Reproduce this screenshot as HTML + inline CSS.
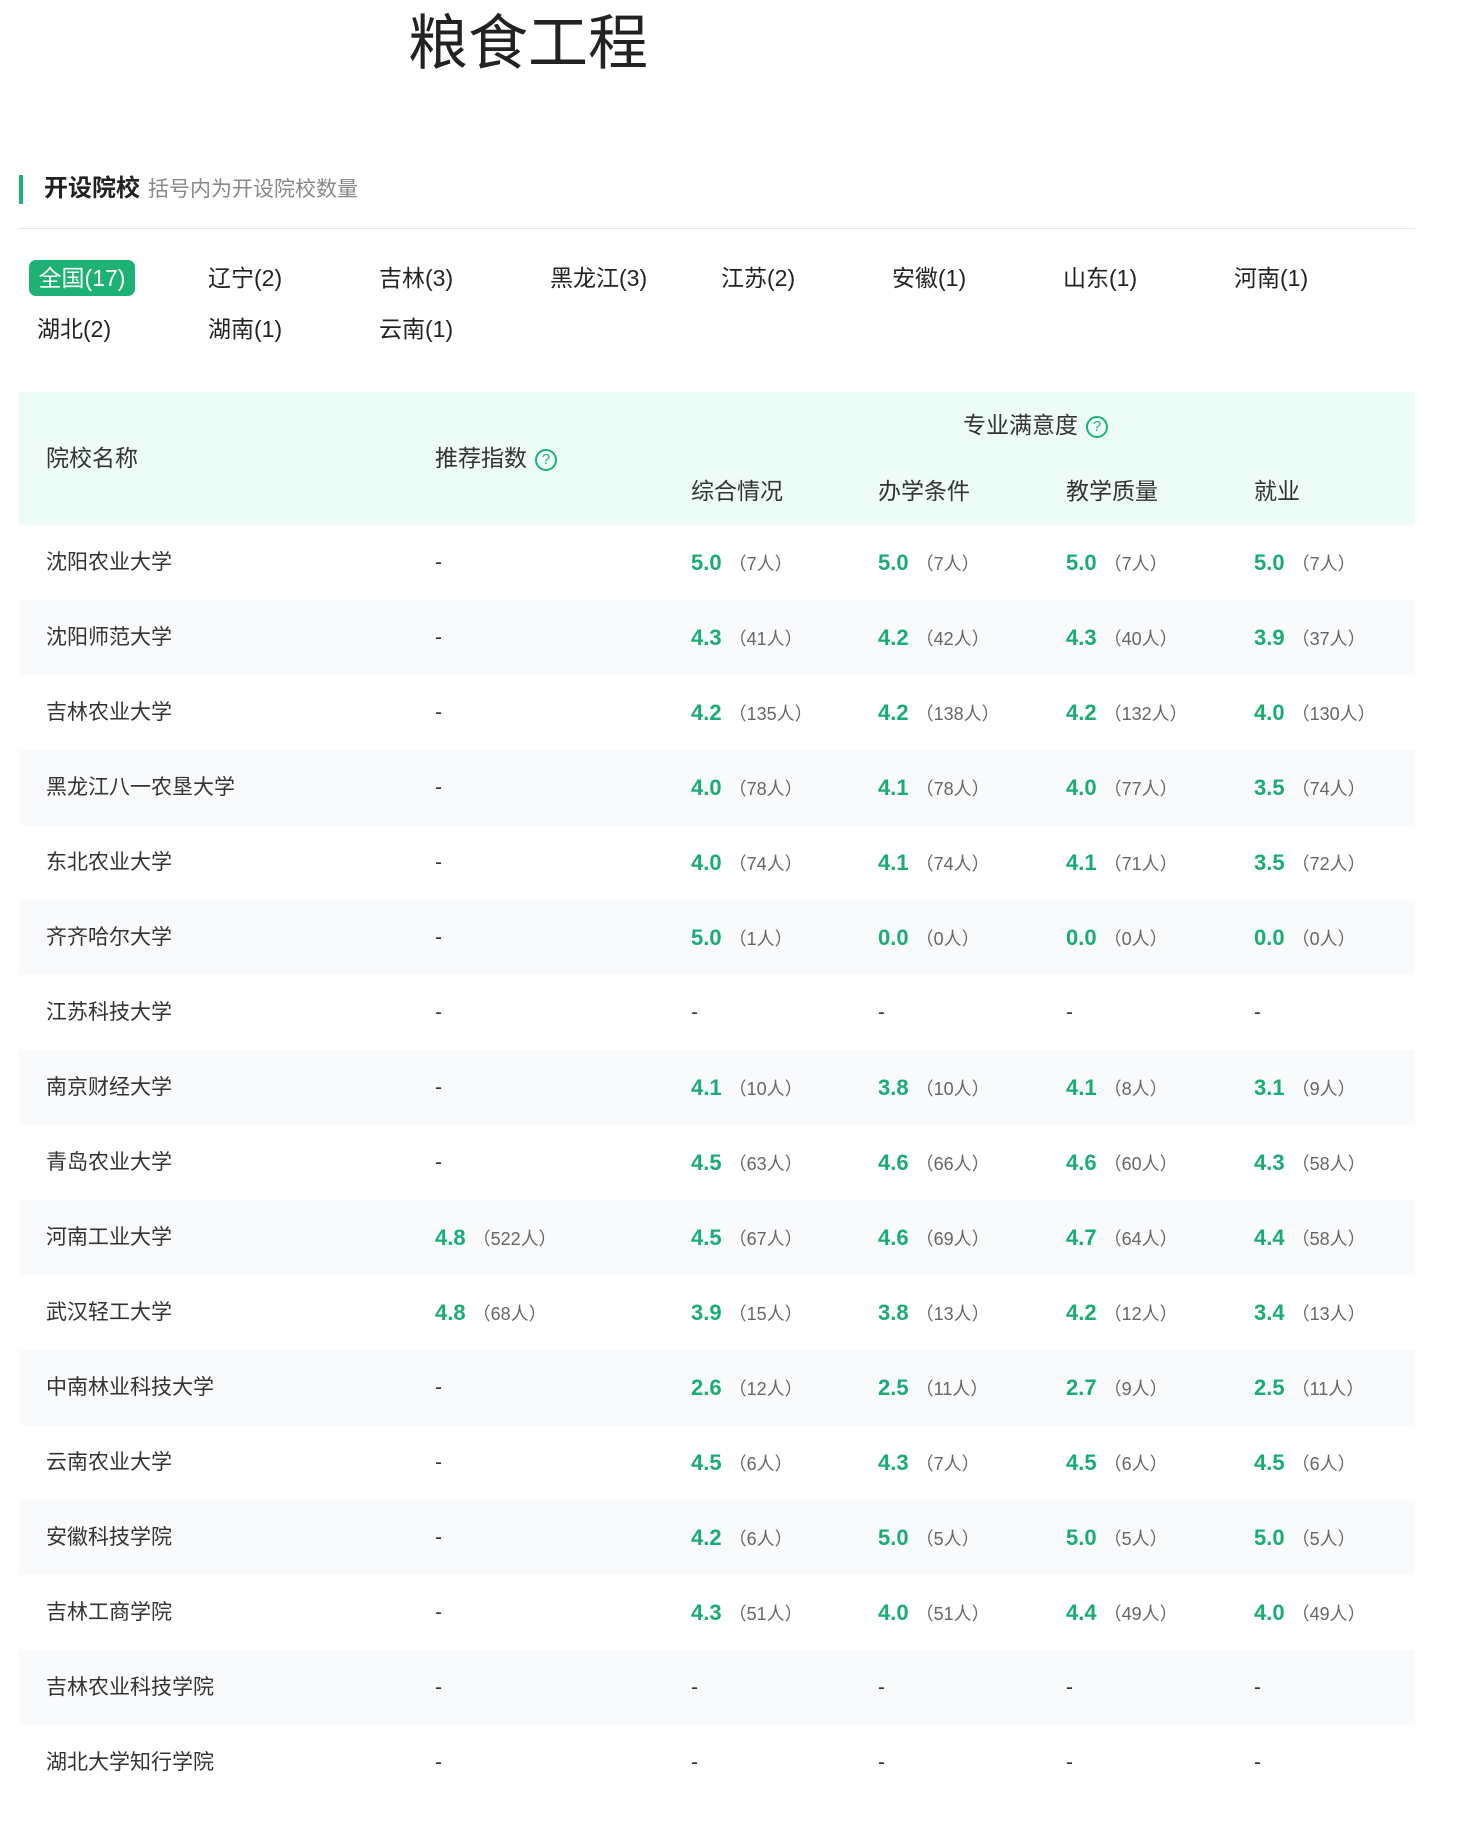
<!DOCTYPE html>
<html><head><meta charset="utf-8"><style>
*{margin:0;padding:0;box-sizing:border-box}
body{width:1459px;height:1843px;background:#fff;font-family:"Liberation Sans","Noto Sans CJK SC",sans-serif;color:#333;position:relative;overflow:hidden}
.abs{position:absolute;white-space:nowrap}
.title{left:408px;top:4px;font-size:60px;line-height:80px;color:#222}
.bar{left:19px;top:175px;width:4px;height:29px;background:#1db273}
.h2{left:44px;top:174px;font-size:24px;font-weight:bold;line-height:30px;color:#222}
.sub{left:148px;top:176px;font-size:21px;line-height:28px;color:#888}
.div{left:19px;top:228px;width:1396px;height:1px;background:#e3e7ee}
.tab{font-size:23px;line-height:36px;color:#222}
.pill{left:29px;top:260px;width:106px;height:36px;border-radius:7px;background:#1db273;color:#fff;text-align:center}
.thead{left:19px;top:392px;width:1396px;height:133px;background:#edfcf6}
.th{font-size:23px;line-height:30px;color:#333}
.q{display:inline-block;width:22px;height:22px;border:2px solid #1db273;border-radius:50%;color:#1db273;font-size:15px;line-height:18px;text-align:center;vertical-align:2px;margin-left:8px}
.row{position:absolute;left:19px;width:1396px;height:75px}
.row.g{background:#f9fafc}
.c{position:absolute;top:0;line-height:75px;font-size:21px;white-space:nowrap}
.s{color:#1aad73;font-weight:bold;font-size:22px}
.n{color:#666;font-size:18px;margin-left:7px}
</style></head><body>
<div class="abs title">粮食工程</div>
<div class="abs bar"></div>
<div class="abs h2">开设院校</div>
<div class="abs sub">括号内为开设院校数量</div>
<div class="abs div"></div>
<div class="abs tab pill">全国(17)</div>
<div class="abs tab" style="left:208px;top:260px">辽宁(2)</div>
<div class="abs tab" style="left:379px;top:260px">吉林(3)</div>
<div class="abs tab" style="left:550px;top:260px">黑龙江(3)</div>
<div class="abs tab" style="left:721px;top:260px">江苏(2)</div>
<div class="abs tab" style="left:892px;top:260px">安徽(1)</div>
<div class="abs tab" style="left:1063px;top:260px">山东(1)</div>
<div class="abs tab" style="left:1234px;top:260px">河南(1)</div>
<div class="abs tab" style="left:37px;top:311px">湖北(2)</div>
<div class="abs tab" style="left:208px;top:311px">湖南(1)</div>
<div class="abs tab" style="left:379px;top:311px">云南(1)</div>
<div class="abs thead"></div>
<div class="abs th" style="left:46px;top:443px">院校名称</div>
<div class="abs th" style="left:435px;top:443px">推荐指数<span class="q">?</span></div>
<div class="abs th" style="left:963px;top:410px">专业满意度<span class="q">?</span></div>
<div class="abs th" style="left:691px;top:476px">综合情况</div>
<div class="abs th" style="left:878px;top:476px">办学条件</div>
<div class="abs th" style="left:1066px;top:476px">教学质量</div>
<div class="abs th" style="left:1254px;top:476px">就业</div>
<div id="rows"></div>
<script>
var d=[["沈阳农业大学",null,[5.0,7],[5.0,7],[5.0,7],[5.0,7]],
["沈阳师范大学",null,[4.3,41],[4.2,42],[4.3,40],[3.9,37]],
["吉林农业大学",null,[4.2,135],[4.2,138],[4.2,132],[4.0,130]],
["黑龙江八一农垦大学",null,[4.0,78],[4.1,78],[4.0,77],[3.5,74]],
["东北农业大学",null,[4.0,74],[4.1,74],[4.1,71],[3.5,72]],
["齐齐哈尔大学",null,[5.0,1],[0.0,0],[0.0,0],[0.0,0]],
["江苏科技大学",null,null,null,null,null],
["南京财经大学",null,[4.1,10],[3.8,10],[4.1,8],[3.1,9]],
["青岛农业大学",null,[4.5,63],[4.6,66],[4.6,60],[4.3,58]],
["河南工业大学",[4.8,522],[4.5,67],[4.6,69],[4.7,64],[4.4,58]],
["武汉轻工大学",[4.8,68],[3.9,15],[3.8,13],[4.2,12],[3.4,13]],
["中南林业科技大学",null,[2.6,12],[2.5,11],[2.7,9],[2.5,11]],
["云南农业大学",null,[4.5,6],[4.3,7],[4.5,6],[4.5,6]],
["安徽科技学院",null,[4.2,6],[5.0,5],[5.0,5],[5.0,5]],
["吉林工商学院",null,[4.3,51],[4.0,51],[4.4,49],[4.0,49]],
["吉林农业科技学院",null,null,null,null,null],
["湖北大学知行学院",null,null,null,null,null]];
var xs=[416,672,859,1047,1235],h="";
d.forEach(function(r,i){
 h+='<div class="row'+(i%2?' g':'')+'" style="top:'+(525+i*75)+'px"><div class="c" style="left:27px">'+r[0]+'</div>';
 for(var k=1;k<6;k++){var v=r[k];
  h+='<div class="c" style="left:'+xs[k-1]+'px">'+(v?'<span class="s">'+v[0].toFixed(1)+'</span><span class="n">（'+v[1]+'人）</span>':'-')+'</div>';}
 h+='</div>';});
document.getElementById('rows').innerHTML=h;
</script>
</body></html>
